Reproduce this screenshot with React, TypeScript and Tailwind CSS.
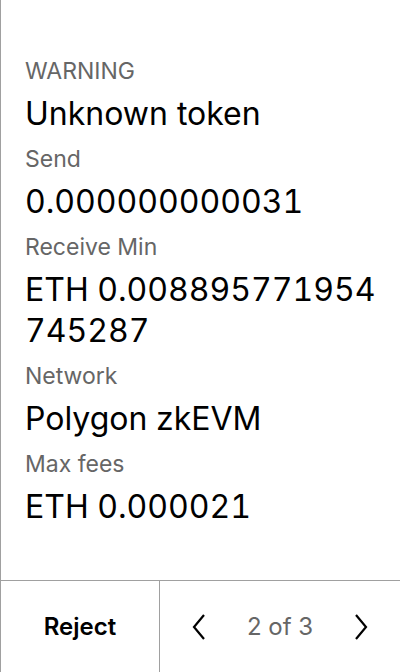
const rows = [
  { label: "Send", value: "0.000000000031" },
  { label: "Receive Min", value: "ETH 0.008895771954745287" },
  { label: "Network", value: "Polygon zkEVM" },
  { label: "Max fees", value: "ETH 0.000021" },
];

const Chevron = ({ dir }: { dir: "left" | "right" }) => (
  <svg width="14" height="26" viewBox="0 0 14 26" fill="none">
    <path
      d={dir === "left" ? "M12 1 L2 13 L12 25" : "M2 1 L12 13 L2 25"}
      stroke="#000"
      strokeWidth="2.2"
    />
  </svg>
);

export default function App() {
  return (
    <div className="w-[400px] h-[672px] bg-white border-l border-[#a0a0a0] flex flex-col font-['Inter',sans-serif]">
      <div className="flex-1 pl-6 pr-6 pt-[55px]">
        <p className="text-[23px] leading-[32px] text-[#666]">WARNING</p>
        <p className="text-[32px] leading-[41px] text-black mt-[6px]">Unknown token</p>
        {rows.map((r) => (
          <div key={r.label} className="mt-[9px]">
            <p className="text-[23px] leading-[32px] text-[#666]">{r.label}</p>
            <p className="text-[32px] leading-[41px] text-black break-all tabular-nums mt-[6px]">{r.value}</p>
          </div>
        ))}
      </div>
      <div className="h-[92px] border-t border-[#a0a0a0] flex">
        <button className="w-[159px] border-r border-[#a0a0a0] flex items-center justify-center text-[24px] font-semibold text-black">
          Reject
        </button>
        <div className="flex-1 flex items-center justify-between pl-[32px] pr-[32px]">
          <Chevron dir="left" />
          <span className="text-[24px] text-[#666]">2 of 3</span>
          <Chevron dir="right" />
        </div>
      </div>
    </div>
  );
}
